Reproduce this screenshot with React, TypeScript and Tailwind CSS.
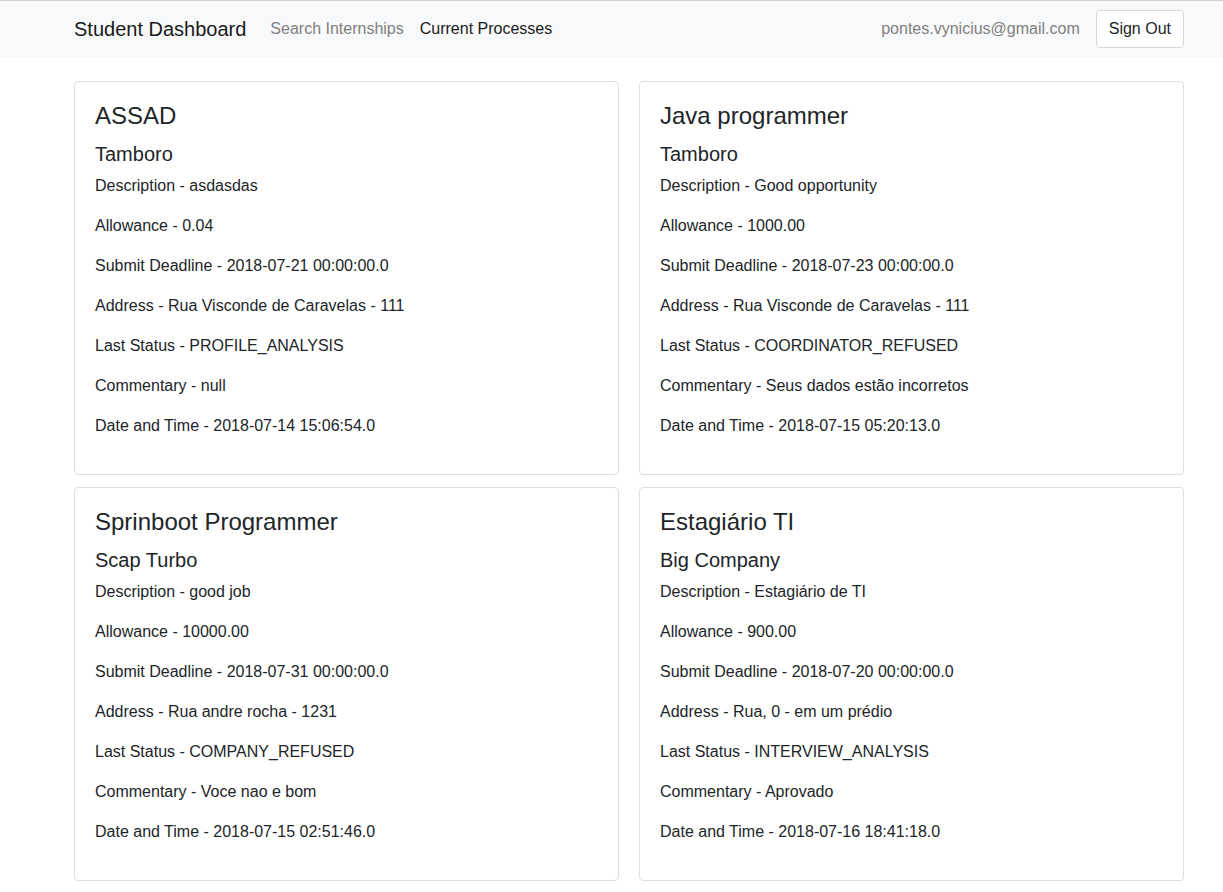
import React from "react";

type Proc = {
  title: string;
  company: string;
  description: string;
  allowance: string;
  deadline: string;
  address: string;
  status: string;
  commentary: string;
  date: string;
};

const data: Proc[] = [
  {
    title: "ASSAD",
    company: "Tamboro",
    description: "asdasdas",
    allowance: "0.04",
    deadline: "2018-07-21 00:00:00.0",
    address: "Rua Visconde de Caravelas - 111",
    status: "PROFILE_ANALYSIS",
    commentary: "null",
    date: "2018-07-14 15:06:54.0",
  },
  {
    title: "Java programmer",
    company: "Tamboro",
    description: "Good opportunity",
    allowance: "1000.00",
    deadline: "2018-07-23 00:00:00.0",
    address: "Rua Visconde de Caravelas - 111",
    status: "COORDINATOR_REFUSED",
    commentary: "Seus dados estão incorretos",
    date: "2018-07-15 05:20:13.0",
  },
  {
    title: "Sprinboot Programmer",
    company: "Scap Turbo",
    description: "good job",
    allowance: "10000.00",
    deadline: "2018-07-31 00:00:00.0",
    address: "Rua andre rocha - 1231",
    status: "COMPANY_REFUSED",
    commentary: "Voce nao e bom",
    date: "2018-07-15 02:51:46.0",
  },
  {
    title: "Estagiário TI",
    company: "Big Company",
    description: "Estagiário de TI",
    allowance: "900.00",
    deadline: "2018-07-20 00:00:00.0",
    address: "Rua, 0 - em um prédio",
    status: "INTERVIEW_ANALYSIS",
    commentary: "Aprovado",
    date: "2018-07-16 18:41:18.0",
  },
];

function Card({ p }: { p: Proc }) {
  const rows: [string, string][] = [
    ["Description", p.description],
    ["Allowance", p.allowance],
    ["Submit Deadline", p.deadline],
    ["Address", p.address],
    ["Last Status", p.status],
    ["Commentary", p.commentary],
    ["Date and Time", p.date],
  ];
  return (
    <div className="border border-[#dfdfdf] rounded-[4px] bg-white p-5">
      <h4 className="text-[24px] leading-[1.2] font-medium mb-[11px]">{p.title}</h4>
      <h5 className="text-[20px] leading-[1.2] font-medium mb-2">{p.company}</h5>
      {rows.map(([k, v]) => (
        <p key={k} className="text-[16px] leading-[24px] mb-4">
          {k} - {v}
        </p>
      ))}
    </div>
  );
}

export default function App() {
  return (
    <div
      className="min-h-[892px] bg-white text-[#212529]"
      style={{ fontFamily: '"Liberation Sans", Arial, sans-serif' }}
    >
      <div className="border-t border-[#cfcfcf] bg-[#f8f9fa]">
        <nav className="w-[1110px] ml-[74px] h-[56px] flex items-center">
          <span className="text-[20px] text-[#1a1a1a] mr-4 leading-[30px]">Student Dashboard</span>
          <span className="px-2 text-[16px] text-[#808080]">Search Internships</span>
          <span className="px-2 text-[16px] text-[#1a1a1a]">Current Processes</span>
          <div className="ml-auto flex items-center gap-4">
            <span className="text-[16px] text-[#808080]">pontes.vynicius@gmail.com</span>
            <button className="h-[38px] px-3 bg-white border border-[#d6d8db] rounded-[4px] text-[16px] text-[#212529]">
              Sign Out
            </button>
          </div>
        </nav>
      </div>
      <main className="w-[1110px] ml-[74px] mt-6 grid grid-cols-2 gap-x-5 gap-y-3">
        {data.map((p) => (
          <Card key={p.title} p={p} />
        ))}
      </main>
    </div>
  );
}
